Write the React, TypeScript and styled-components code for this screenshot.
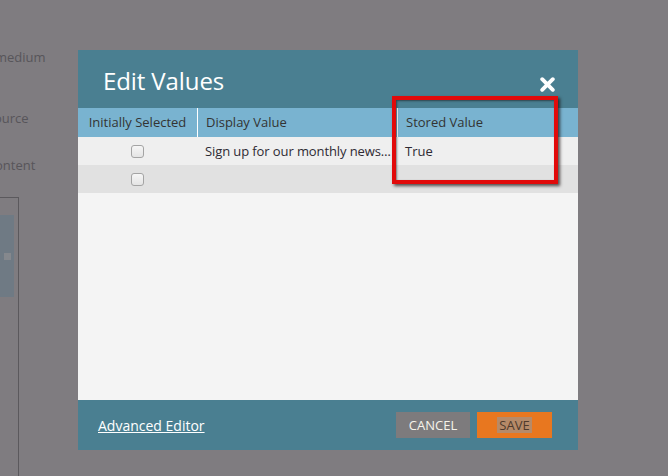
import React from 'react';
import styled, { createGlobalStyle } from 'styled-components';

const GlobalStyle = createGlobalStyle`
    html, body {
        margin: 0;
        padding: 0;
        background: #7f7c80;
        font-family: "Open Sans", "Noto Sans", sans-serif;
    }
`;

const Page = styled.div`
    position: relative;
    width: 668px;
    height: 476px;
    overflow: hidden;
    background: #7f7c80;
`;

const BackForm = styled.div`
    display: flex;
    flex-direction: column;
    padding-top: 47px;
`;

interface IFieldLabelProps {
    gap: number;
    shift: number;
}

const FieldLabel = styled.div<IFieldLabelProps>`
    margin-top: ${({gap}) => gap}px;
    margin-left: ${({shift}) => shift}px;
    font-size: 13px;
    line-height: 20px;
    color: #57555a;
`;

const BackPanel = styled.div`
    margin-top: 22px;
    width: 19px;
    height: 300px;
    border-right: 1px solid #5b595d;
    border-top: 1px solid #5b595d;
    padding-top: 17px;
    box-sizing: border-box;
`;

const BackStrip = styled.div`
    width: 14px;
    height: 82px;
    background: #6f7a84;
    display: flex;
    align-items: center;
    justify-content: center;
`;

const BackHandle = styled.div`
    width: 7px;
    height: 7px;
    background: #85888d;
`;

const Modal = styled.div`
    position: absolute;
    left: 78px;
    top: 50px;
    width: 500px;
    height: 400px;
    display: flex;
    flex-direction: column;
    background: #f4f4f4;
`;

const ModalHeader = styled.div`
    height: 58px;
    background: #4a7f91;
    display: flex;
    align-items: center;
    justify-content: space-between;
    padding: 2px 23px 0 25px;
    box-sizing: border-box;
`;

const Title = styled.h1`
    margin: 0;
    font-size: 24px;
    font-weight: 400;
    color: #ffffff;
    letter-spacing: -0.1px;
`;

const CloseButton = styled.div`
    width: 15px;
    height: 15px;
    margin-top: 4px;
    cursor: pointer;
`;

const Table = styled.div`
    display: grid;
    grid-template-columns: 119px 200px 181px;
`;

interface ICellProps {
    center?: boolean;
}

const HeadCell = styled.div<ICellProps>`
    height: 29px;
    background: #79b3d0;
    display: flex;
    align-items: center;
    justify-content: ${({center}) => (center ? 'center' : 'flex-start')};
    padding: 0 8px 1px;
    box-sizing: border-box;
    font-size: 13px;
    color: #333333;
    & + & {
        border-left: 1px solid #ffffff;
    }
    &:last-child {
        border-left: none;
        border-right: 1px solid #ffffff;
    }
`;

interface IRowCellProps extends ICellProps {
    alt?: boolean;
}

const Cell = styled.div<IRowCellProps>`
    height: 28px;
    background: ${({alt}) => (alt ? '#e1e1e1' : '#efefef')};
    display: flex;
    align-items: center;
    justify-content: ${({center}) => (center ? 'center' : 'flex-start')};
    padding: ${({center}) => (center ? '0' : '0 5px 0 8px')};
    box-sizing: border-box;
    font-size: 13px;
    color: #2e2a33;
    white-space: nowrap;
    overflow: hidden;
    min-width: 0;
`;

const Ellipsis = styled.span`
    overflow: hidden;
    text-overflow: ellipsis;
    white-space: nowrap;
    letter-spacing: -0.1px;
`;

const Checkbox = styled.span`
    width: 11px;
    height: 11px;
    border: 1px solid #a4a4a4;
    border-radius: 3px;
    background: linear-gradient(#f6f6f6, #e4e4e4);
`;

const Body = styled.div`
    flex: 1;
    background: #f4f4f4;
`;

const Footer = styled.div`
    height: 50px;
    background: #4a7f91;
    display: flex;
    align-items: center;
    padding: 0 26px 0 20px;
    box-sizing: border-box;
`;

const AdvancedLink = styled.a`
    font-size: 14px;
    color: #ffffff;
    text-decoration: underline;
    cursor: pointer;
    margin-right: auto;
    margin-top: 1px;
`;

interface IButtonProps {
    primary?: boolean;
}

const Button = styled.div<IButtonProps>`
    width: ${({primary}) => (primary ? 75 : 74)}px;
    height: 26px;
    margin-left: 7px;
    display: flex;
    align-items: center;
    justify-content: center;
    font-size: 13px;
    background: ${({primary}) => (primary ? '#e8771f' : '#7d7b7d')};
    color: ${({primary}) => (primary ? '#4f3a2c' : '#f6f3ea')};
    cursor: pointer;
`;

const SelectedText = styled.span`
    background: #b68a68;
    padding: 0 2px;
    line-height: 16px;
`;

const Callout = styled.div`
    position: absolute;
    left: 392px;
    top: 96px;
    width: 166px;
    height: 88px;
    box-sizing: border-box;
    border: 4px solid #e10a0a;
    box-shadow: 2px 2px 3px rgba(20, 10, 10, 0.7), inset 1px 1px 2px rgba(20, 10, 10, 0.5);
    pointer-events: none;
`;

const CloseIcon = () => (
    <svg width="15" height="15" viewBox="0 0 15 15">
        <path d="M2.2 2.2 L12.8 12.8 M12.8 2.2 L2.2 12.8" stroke="#ffffff" strokeWidth="3.8" strokeLinecap="round" />
    </svg>
);

const rows = [
    { display: 'Sign up for our monthly newsletter', stored: 'True' },
    { display: '', stored: '' },
];

export default function App() {
    return (
        <Page>
            <GlobalStyle />
            <BackForm>
                <FieldLabel gap={0} shift={-5}>medium</FieldLabel>
                <FieldLabel gap={41} shift={-6}>ource</FieldLabel>
                <FieldLabel gap={27} shift={-5}>ontent</FieldLabel>
                <BackPanel>
                    <BackStrip>
                        <BackHandle />
                    </BackStrip>
                </BackPanel>
            </BackForm>
            <Modal>
                <ModalHeader>
                    <Title>Edit Values</Title>
                    <CloseButton>
                        <CloseIcon />
                    </CloseButton>
                </ModalHeader>
                <Table>
                    <HeadCell center>Initially Selected</HeadCell>
                    <HeadCell>Display Value</HeadCell>
                    <HeadCell>Stored Value</HeadCell>
                    {rows.map((row, i) => (
                        <React.Fragment key={i}>
                            <Cell center alt={i % 2 === 1}>
                                <Checkbox />
                            </Cell>
                            <Cell alt={i % 2 === 1}>
                                <Ellipsis>{row.display}</Ellipsis>
                            </Cell>
                            <Cell alt={i % 2 === 1}>{row.stored}</Cell>
                        </React.Fragment>
                    ))}
                </Table>
                <Body />
                <Footer>
                    <AdvancedLink>Advanced Editor</AdvancedLink>
                    <Button>CANCEL</Button>
                    <Button primary>
                        <SelectedText>SAVE</SelectedText>
                    </Button>
                </Footer>
            </Modal>
            <Callout />
        </Page>
    );
}
